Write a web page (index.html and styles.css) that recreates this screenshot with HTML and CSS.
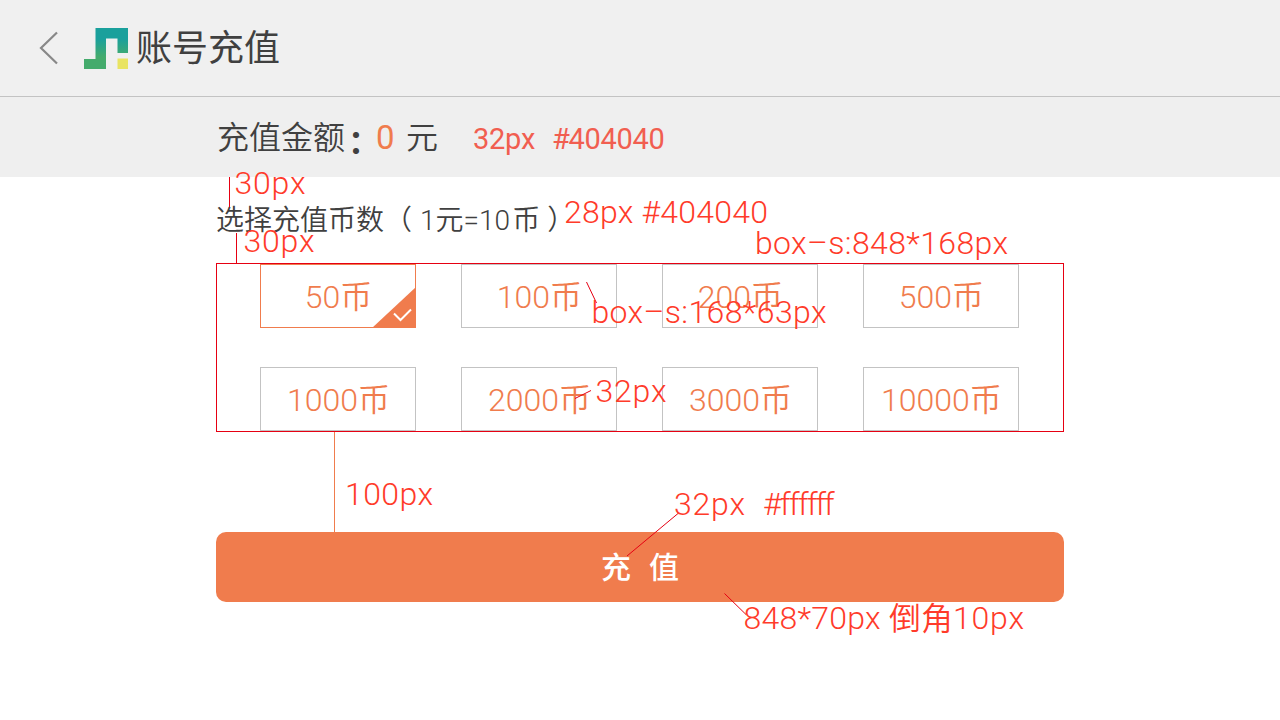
FILE: index.html
```html
<!DOCTYPE html>
<html lang="zh-CN">
<head>
<meta charset="utf-8">
<title>账号充值</title>
<link rel="stylesheet" href="styles.css">
</head>
<body>
<header class="topbar">
  <svg class="back" width="20" height="34" viewBox="0 0 20 34"><path d="M18 1.500 2 17 18 32.500" fill="none" stroke="#888" stroke-width="2.200"/></svg>
  <svg class="logo" width="44" height="41" viewBox="0 0 44 41">
    <defs><linearGradient id="g" gradientUnits="userSpaceOnUse" x1="0" y1="11" x2="0" y2="29"><stop offset="0" stop-color="#1aa09c"/><stop offset="1" stop-color="#44ab6c"/></linearGradient></defs>
    <path d="M11.500 0H44V25H33.500V10.500H22V41H0V31H11.500Z" fill="url(#g)"/>
    <path d="M33.500 30.500H44V41H33.500Z" fill="#e9e462"/>
  </svg>
  <h1 class="title">账号充值</h1>
</header>
<section class="amount">
  <span>充值金额</span><span class="colon">：</span><span class="amount-value">0</span><span>元</span>
</section>
<main class="content">
  <p class="hint"><span class="label">选择充值币数</span><span class="open">（</span><span class="rate">1<b>元</b>=10<b>币</b></span><span class="close">）</span></p>
  <div class="options">
    <button class="option selected">50<b>币</b><svg class="check" width="44" height="41" viewBox="0 0 44 41"><path d="M44 0V41H0Z" fill="#f07c4d"/><path d="M22 26.500 28.500 33 39 22.500" fill="none" stroke="#fff" stroke-width="2"/></svg></button>
    <button class="option">100<b>币</b></button>
    <button class="option">200<b>币</b></button>
    <button class="option">500<b>币</b></button>
    <button class="option">1000<b>币</b></button>
    <button class="option">2000<b>币</b></button>
    <button class="option">3000<b>币</b></button>
    <button class="option">10000<b>币</b></button>
  </div>
  <button class="submit"><span>充</span><span>值</span></button>
</main>
<svg class="notes" width="1280" height="720" viewBox="0 0 1280 720">
  <g class="lines">
    <path d="M229.500 177V207M236.500 233V263" shape-rendering="crispEdges"/>
    <path class="gap-line" d="M334.500 432V532" shape-rendering="crispEdges"/>
    <path d="M586.500 282 596.500 303M575 398.500 591 390.500M627 556 678 513.500M724.500 593.500 746 614.500"/>
  </g>
  <text class="soft" y="149" x="473 489 505 521 537 552 568.500 584.500 600.500 616.500 632.500 648.500">32px #404040</text>
  <text x="234.500" y="194" textLength="71">30px</text>
  <text x="243.500" y="252" textLength="71">30px</text>
  <text x="564" y="223" textLength="204">28px #404040</text>
  <text x="755" y="254" textLength="253">box–s:848*168px</text>
  <text x="591.500" y="323" textLength="235">box–s:168*63px</text>
  <text x="595.500" y="402" textLength="71">32px</text>
  <text x="345" y="505" textLength="88">100px</text>
  <text x="674" y="515" textLength="71">32px</text>
  <text y="515" x="763 780 789 798 807 815.500 824">#ffffff</text>
  <text x="743.500" y="629" textLength="137">848*70px</text>
  <text class="cjk" x="889" y="630">倒角</text>
  <text x="953" y="629" textLength="71">10px</text>
</svg>
</body>
</html>
```
FILE: styles.css
```css
* { box-sizing: border-box; }
body {
  margin: 0;
  position: relative;
  height: 720px;
  overflow: hidden;
  background: #fff;
  color: #404040;
  font-family: Roboto, "Noto Sans CJK SC", sans-serif;
  font-weight: 300;
}
button {
  padding: 0;
  font: inherit;
}
b { font-weight: 350; }
.topbar {
  display: flex;
  align-items: center;
  height: 97px;
  padding: 0 0 0 39px;
  background: #f0f0f0;
  border-bottom: 1px solid #c3c3c3;
}
.logo { margin-left: 25px; }
.title {
  margin: 2px 0 0 8px;
  font-size: 36px;
  font-weight: 400;
  line-height: 48px;
}
.amount {
  display: flex;
  height: 80px;
  padding-left: 217px;
  background: #efefef;
  font-size: 32px;
  font-weight: 350;
  line-height: 82px;
}
.colon {
  padding-top: 4px;
  margin: 0 -4px 0 3px;
  font-weight: 700;
}
.amount-value {
  width: 30px;
  color: #f07c4d;
  font-size: 33px;
  font-weight: 400;
}
.content {
  width: 848px;
  margin: 0 auto;
}
.hint {
  display: flex;
  height: 86px;
  margin: 0;
  padding-top: 24px;
  font-size: 28px;
  line-height: 40px;
}
.label,
.open,
.close { font-weight: 350; }
.rate { margin-left: 8px; }
.rate b:last-child { margin-left: 2px; }
.close { margin-left: 7px; }
.options {
  display: grid;
  grid-template-columns: repeat(4, 156px);
  grid-auto-rows: 64px;
  column-gap: 45px;
  row-gap: 39px;
  height: 169px;
  padding-left: 43px;
  border: 1px solid #e60012;
}
.option {
  position: relative;
  background: #fff;
  border: 1px solid #c3c3c3;
  color: #f07c4d;
  font-size: 32px;
  line-height: 62px;
  padding: 1px 0 0 1px;
}
.option.selected { border-color: #f07c4d; }
.check {
  position: absolute;
  right: -1px;
  bottom: -1px;
}
.submit {
  display: flex;
  align-items: center;
  justify-content: center;
  gap: 18px;
  width: 100%;
  height: 70px;
  margin-top: 100px;
  padding-bottom: 5px;
  border: 0;
  border-radius: 10px;
  background: #f07c4d;
  color: #fff;
  font-size: 30px;
  font-weight: 500;
}
.notes {
  position: absolute;
  top: 0;
  left: 0;
  pointer-events: none;
  font-size: 32px;
  fill: #ff3b2a;
}
.notes .soft {
  font-weight: 400;
  font-size: 29px;
  fill: #f15e50;
}
.notes .cjk { font-weight: 350; }
.lines {
  fill: none;
  stroke: #e60012;
  stroke-width: 1;
}
.gap-line { stroke: #f07c4d; }
```
